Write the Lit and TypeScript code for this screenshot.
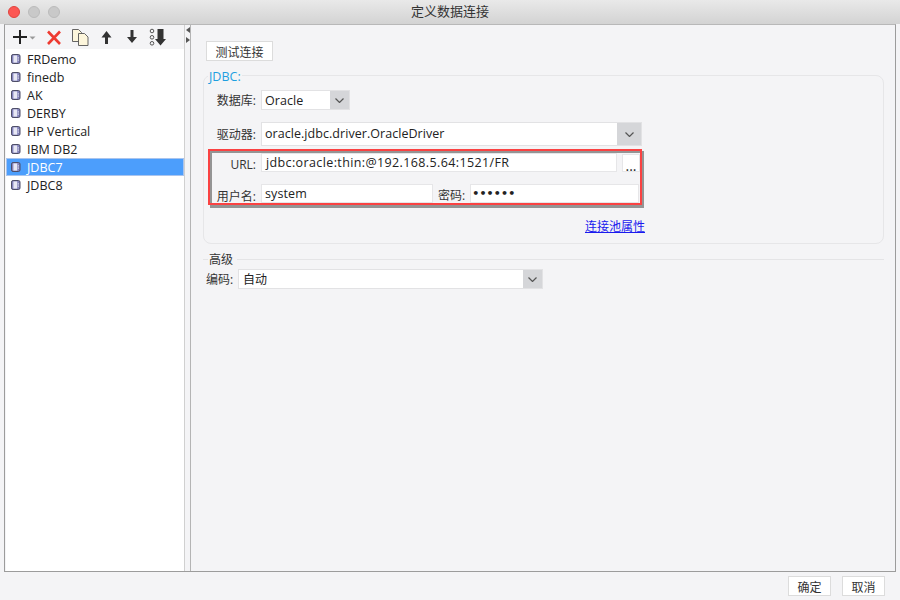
import { LitElement, html, css, svg } from "lit";
import { customElement } from "lit/decorators.js";

const items = ["FRDemo", "finedb", "AK", "DERBY", "HP Vertical", "IBM DB2", "JDBC7", "JDBC8"];

const dbIcon = html`<svg class="db" width="10" height="10" viewBox="0 0 10 10">
  <rect x="0.5" y="0.5" width="8.5" height="9" rx="1.6" fill="#8484bd" stroke="#4d4d66"/>
  <rect x="2.4" y="1.4" width="3.8" height="7.2" fill="#e8e8f4"/>
  <rect x="6.8" y="3.4" width="1" height="1" fill="#fff"/>
  <rect x="6.8" y="5.6" width="1" height="1" fill="#fff"/>
</svg>`;

const chevron = svg`<path d="M0.5 0.5 L4.5 4.5 L8.5 0.5" fill="none" stroke="#555" stroke-width="1.2"/>`;

@customElement("app-root")
export class AppRoot extends LitElement {
  static styles = css`
    :host {
      display: flex;
      flex-direction: column;
      width: 900px;
      height: 600px;
      background: #f4f4f6;
      font-family: "Open Sans", "Noto Sans CJK SC", sans-serif;
      font-size: 12.5px;
      color: #222;
      overflow: hidden;
      position: relative;
    }
    .title {
      height: 24px;
      flex: none;
      display: flex;
      align-items: center;
      justify-content: center;
      position: relative;
      box-sizing: border-box;
      padding-bottom: 3px;
      background: linear-gradient(#e9e9e9, #d3d3d3);
      font-family: "Noto Sans CJK SC", sans-serif;
      font-size: 13px;
      color: #333;
    }
    .lights {
      position: absolute;
      left: 8px;
      top: 6px;
      display: flex;
      gap: 8px;
    }
    .light { width: 12px; height: 12px; border-radius: 50%; background: #c9c9c9; border: 0.5px solid #bbb; box-sizing: border-box; }
    .light.close { background: #fc5753; border-color: #e0443e; }
    .frame {
      flex: none;
      height: 548px;
      margin: 0 4px;
      border: 1px solid #9c9c9c;
      border-top-color: #b8b8b8;
      display: flex;
      box-sizing: border-box;
      background: #f4f4f6;
    }
    .left { width: 179px; flex: none; display: flex; flex-direction: column; border-right: 1px solid #d0d0d0; }
    .toolbar { height: 24px; flex: none; display: flex; align-items: center; }
    .toolbar svg { display: block; flex: none; }
    .list { flex: 1; background: #fff; padding-top: 1px; margin-left: 1px; font-size: 12.5px; }
    .row { height: 18px; display: flex; align-items: center; padding-left: 5px; gap: 6px; box-sizing: border-box; }
    .row.sel { background: #4c9efc; color: #fff; border: 1px solid #a9c4ee; padding-left: 4px; }
    .db { flex: none; }
    .splitter { width: 5px; flex: none; border-right: 1px solid #b4b4b4; display: flex; flex-direction: column; align-items: center; gap: 4px; padding-top: 2px; }
    .tri { width: 0; height: 0; border-top: 3.5px solid transparent; border-bottom: 3.5px solid transparent; }
    .tri.l { border-right: 4px solid #555; }
    .tri.r { border-left: 4px solid #555; }
    .main { flex: 1; padding: 16px 11px 0 12px; min-width: 0; }
    .btn {
      display: flex;
      align-items: center;
      justify-content: center;
      background: #fff;
      border: 1px solid #dcdcdc;
      box-sizing: border-box;
      font-family: "Noto Sans CJK SC", sans-serif;
      font-size: 12px;
      color: #333;
    }
    .test { width: 67px; height: 20px; margin-left: 3px; }
    .group {
      margin-top: 14px;
      height: 169px;
      border: 1px solid #e6e6e8;
      border-radius: 8px;
      box-sizing: border-box;
      position: relative;
      padding: 14px 0 0 0;
    }
    .legend {
      position: absolute;
      left: 4px;
      top: -6px;
      color: #1e9fe0;
      background: #f4f4f6;
      padding: 0 1px;
      font-size: 12.5px;
      line-height: 14px;
    }
    .frow { display: flex; align-items: center; padding-left: 12px; }
    .lbl { width: 40px; text-align: right; font-family: "Open Sans", "Noto Sans CJK SC", sans-serif; font-size: 12px; color: #333; white-space: nowrap; flex: none; margin-right: 5px; }
    .select { display: flex; background: #fff; border: 1px solid #e2e2e4; box-sizing: border-box; align-items: stretch; }
    .select .val { flex: 1; display: flex; align-items: center; padding-left: 3px; white-space: nowrap; color: #222; letter-spacing: 0.05px; }
    .select .arrow { background: #d5d6d9; display: flex; align-items: center; justify-content: center; flex: none; }
    .db-sel { width: 89px; height: 20px; }
    .db-sel .arrow { width: 19px; }
    .drv-sel { width: 381px; height: 24px; }
    .drv-sel .val { padding-bottom: 1px; }
    .drv-sel .arrow { width: 24px; }
    .r2 { margin-top: 12px; }
    .popup {
      margin: 5px 0 0 6px;
      width: 434px;
      height: 57px;
      box-sizing: border-box;
      border: 2px solid #949494;
      border-bottom-width: 3px;
      border-right-width: 3px;
      display: flex;
      flex-direction: column;
      background: #f4f4f6;
      position: relative;
    }
    .prow { display: flex; align-items: flex-start; }
    .prow .lbl { width: 44px; margin-right: 5px; padding-top: 3px; }
    .input { background: #fff; border: 1px solid #e6e6e8; box-sizing: border-box; height: 19px; display: flex; align-items: center; padding-left: 4px; white-space: nowrap; color: #222; }
    .url { width: 356px; letter-spacing: 0.38px; }
    .dots { width: 18px; height: 18px; margin: 1px 0 0 5px; background: #fff; border: 1px solid #e6e6e8; box-sizing: border-box; display: flex; align-items: center; justify-content: center; padding-top: 4px; font-size: 14px; }
    .user { width: 172px; padding-left: 3px; letter-spacing: 0.1px; }
    .pw-lbl { margin: 0 5px; padding-top: 2px; font-size: 12px; color: #333; white-space: nowrap; }
    .pw { width: 169px; padding-left: 1px; letter-spacing: 0.2px; font-size: 11px; font-weight: bold; font-family: "DejaVu Sans", sans-serif; }
    .p2 { margin-top: 11px; }
    .mark {
      position: absolute;
      left: -4px;
      top: -4px;
      width: 430px;
      height: 52px;
      border: 2px solid #fa4242;
      pointer-events: none;
    }
    .linkrow { display: flex; justify-content: flex-end; padding-right: 238px; margin-top: 9px; }
    .link { color: #1a1aee; text-decoration: underline; font-size: 12px; white-space: nowrap; }
    .adv { display: flex; align-items: center; margin-top: 8px; height: 14px; font-size: 12px; color: #333; }
    .adv::before { content: ""; width: 5px; height: 1px; background: #e4e4e6; }
    .adv::after { content: ""; flex: 1; height: 1px; background: #e4e4e6; margin-left: 4px; }
    .adv span { padding-left: 1px; }
    .encrow { display: flex; align-items: center; margin-top: 3px; padding-left: 3px; }
    .encrow .t { font-size: 12px; color: #333; margin-right: 4px; width: 28px; white-space: nowrap; }
    .enc-sel { width: 305px; height: 20px; font-size: 12px; }
    .enc-sel .val { padding-left: 4px; }
    .enc-sel .arrow { width: 19px; }
    .footer { flex: 1; display: flex; justify-content: flex-end; gap: 11px; padding: 4px 15px 0 0; }
    .footer .btn { width: 43px; height: 20px; }
  `;

  render() {
    return html`
      <div class="title">
        <div class="lights"><span class="light close"></span><span class="light"></span><span class="light"></span></div>
        定义数据连接
      </div>
      <div class="frame">
        <div class="left">
          <div class="toolbar">
            <svg width="178" height="24" viewBox="0 0 178 24">
              <path d="M8 12 H22 M15 5 V19" stroke="#222" stroke-width="2" fill="none"/>
              <path d="M24.5 11.5 h6 l-3 3 z" fill="#999"/>
              <path d="M43 6.5 L55 19 M55 6.5 L43 19" stroke="#ee3a30" stroke-width="2.6" fill="none"/>
              <path d="M67.5 4.5 h6 l3 3 v9 h-9 z" fill="#fdf6dc" stroke="#555" stroke-width="0.9"/>
              <path d="M73.5 8.5 h6 l3.5 3.5 v8.5 h-9.5 z" fill="#fdf6dc" stroke="#555" stroke-width="0.9"/>
              <path d="M101.5 6 L106.5 12.5 H103 V19 H100 V12.5 H96.5 z" fill="#333"/>
              <path d="M125.5 5 H128.5 V12 H132 L127 18 L122 12 H125.5 z" fill="#333"/>
              <circle cx="147" cy="6" r="1.8" fill="none" stroke="#555" stroke-width="1"/>
              <circle cx="147" cy="12.3" r="1.8" fill="none" stroke="#555" stroke-width="1"/>
              <circle cx="147" cy="18.3" r="1.8" fill="none" stroke="#555" stroke-width="1"/>
              <path d="M152.5 4 h6 V14 h2.5 l-5.5 6.5 l-5.5 -6.5 h2.5 z" fill="#333"/>
            </svg>
          </div>
          <div class="list">
            ${items.map(
              (n) => html`<div class="row ${n === "JDBC7" ? "sel" : ""}">${dbIcon}<span>${n}</span></div>`
            )}
          </div>
        </div>
        <div class="splitter"><span class="tri l"></span><span class="tri r"></span></div>
        <div class="main">
          <div class="btn test">测试连接</div>
          <div class="group">
            <span class="legend">JDBC:</span>
            <div class="frow">
              <span class="lbl">数据库:</span>
              <div class="select db-sel">
                <span class="val">Oracle</span>
                <span class="arrow"><svg width="9" height="5" viewBox="0 0 9 5">${chevron}</svg></span>
              </div>
            </div>
            <div class="frow r2">
              <span class="lbl">驱动器:</span>
              <div class="select drv-sel">
                <span class="val">oracle.jdbc.driver.OracleDriver</span>
                <span class="arrow"><svg width="9" height="5" viewBox="0 0 9 5">${chevron}</svg></span>
              </div>
            </div>
            <div class="popup">
              <div class="prow">
                <span class="lbl">URL:</span>
                <div class="input url">jdbc:oracle:thin:@192.168.5.64:1521/FR</div>
                <div class="dots">...</div>
              </div>
              <div class="prow p2">
                <span class="lbl">用户名:</span>
                <div class="input user">system</div>
                <span class="pw-lbl">密码:</span>
                <div class="input pw">••••••</div>
              </div>
              <div class="mark"></div>
            </div>
            <div class="linkrow"><span class="link">连接池属性</span></div>
          </div>
          <div class="adv"><span>高级</span></div>
          <div class="encrow">
            <span class="t">编码:</span>
            <div class="select enc-sel">
              <span class="val">自动</span>
              <span class="arrow"><svg width="9" height="5" viewBox="0 0 9 5">${chevron}</svg></span>
            </div>
          </div>
        </div>
      </div>
      <div class="footer">
        <div class="btn">确定</div>
        <div class="btn">取消</div>
      </div>
    `;
  }
}
